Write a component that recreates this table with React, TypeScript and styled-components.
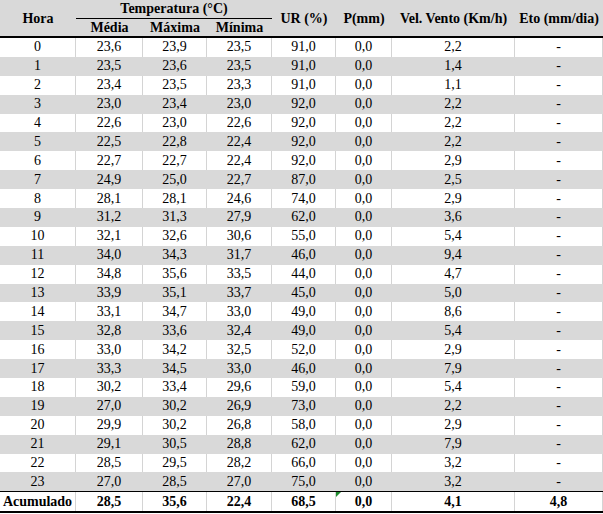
import React from 'react';
import styled, { createGlobalStyle } from 'styled-components';

const GlobalStyle = createGlobalStyle`
  body {
    margin: 0;
    background: #ffffff;
    font-family: 'Liberation Serif', 'Times New Roman', serif;
    color: #000000;
  }
`;

const COLUMNS = '76px 67px 64px 65px 64px 56px 123px 88px';

const Sheet = styled.div`
  width: 603px;
  font-size: 14px;
`;

const Head = styled.div`
  display: grid;
  grid-template-columns: ${COLUMNS};
  grid-template-rows: 19px 17px;
  background: #d9d9d9;
  border-bottom: 2px solid #000000;
  font-weight: bold;
`;

const HeadCell = styled.div<{ $span?: boolean; $group?: boolean }>`
  display: flex;
  align-items: center;
  justify-content: center;
  white-space: nowrap;
  grid-row: ${(p) => (p.$span ? 'span 2' : 'auto')};
  grid-column: ${(p) => (p.$group ? 'span 3' : 'auto')};
  padding-top: ${(p) => (p.$span ? '2px' : '0')};
  ${(p) => (p.$group ? 'border-bottom: 1px solid #000000; margin-top: -1px;' : '')}
`;

const Row = styled.div<{ $shaded?: boolean; $total?: boolean }>`
  display: grid;
  grid-template-columns: ${COLUMNS};
  height: ${(p) => (p.$total ? '19px' : '18.9px')};
  background: ${(p) => (p.$shaded ? '#d9d9d9' : '#ffffff')};
  font-weight: ${(p) => (p.$total ? 'bold' : 'normal')};
  ${(p) =>
    p.$total
      ? 'border-top: 1px solid #000000; border-bottom: 2px solid #000000;'
      : ''}
`;

const Cell = styled.div<{ $shaded?: boolean; $flag?: boolean }>`
  position: relative;
  display: flex;
  align-items: center;
  justify-content: center;
  white-space: nowrap;
  border-right: 1px solid ${(p) => (p.$shaded ? '#d9d9d9' : '#d4d4d4')};

  ${(p) =>
    p.$flag
      ? `&::before {
          content: '';
          position: absolute;
          top: 0;
          left: 0;
          border-top: 5px solid #1e8c2e;
          border-right: 5px solid transparent;
        }`
      : ''}
`;

const rows: string[][] = [
  ['23,6', '23,9', '23,5', '91,0', '0,0', '2,2'],
  ['23,5', '23,6', '23,5', '91,0', '0,0', '1,4'],
  ['23,4', '23,5', '23,3', '91,0', '0,0', '1,1'],
  ['23,0', '23,4', '23,0', '92,0', '0,0', '2,2'],
  ['22,6', '23,0', '22,6', '92,0', '0,0', '2,2'],
  ['22,5', '22,8', '22,4', '92,0', '0,0', '2,2'],
  ['22,7', '22,7', '22,4', '92,0', '0,0', '2,9'],
  ['24,9', '25,0', '22,7', '87,0', '0,0', '2,5'],
  ['28,1', '28,1', '24,6', '74,0', '0,0', '2,9'],
  ['31,2', '31,3', '27,9', '62,0', '0,0', '3,6'],
  ['32,1', '32,6', '30,6', '55,0', '0,0', '5,4'],
  ['34,0', '34,3', '31,7', '46,0', '0,0', '9,4'],
  ['34,8', '35,6', '33,5', '44,0', '0,0', '4,7'],
  ['33,9', '35,1', '33,7', '45,0', '0,0', '5,0'],
  ['33,1', '34,7', '33,0', '49,0', '0,0', '8,6'],
  ['32,8', '33,6', '32,4', '49,0', '0,0', '5,4'],
  ['33,0', '34,2', '32,5', '52,0', '0,0', '2,9'],
  ['33,3', '34,5', '33,0', '46,0', '0,0', '7,9'],
  ['30,2', '33,4', '29,6', '59,0', '0,0', '5,4'],
  ['27,0', '30,2', '26,9', '73,0', '0,0', '2,2'],
  ['29,9', '30,2', '26,8', '58,0', '0,0', '2,9'],
  ['29,1', '30,5', '28,8', '62,0', '0,0', '7,9'],
  ['28,5', '29,5', '28,2', '66,0', '0,0', '3,2'],
  ['27,0', '28,5', '27,0', '75,0', '0,0', '3,2'],
];

const total = ['Acumulado', '28,5', '35,6', '22,4', '68,5', '0,0', '4,1', '4,8'];

export default function App() {
  return (
    <>
      <GlobalStyle />
      <Sheet>
        <Head>
          <HeadCell $span>Hora</HeadCell>
          <HeadCell $group>Temperatura (°C)</HeadCell>
          <HeadCell $span>UR (%)</HeadCell>
          <HeadCell $span>P(mm)</HeadCell>
          <HeadCell $span>Vel. Vento (Km/h)</HeadCell>
          <HeadCell $span>Eto (mm/dia)</HeadCell>
          <HeadCell>Média</HeadCell>
          <HeadCell>Máxima</HeadCell>
          <HeadCell>Mínima</HeadCell>
        </Head>

        {rows.map((values, hour) => {
          const shaded = hour % 2 === 1;
          return (
            <Row key={hour} $shaded={shaded}>
              <Cell $shaded={shaded}>{hour}</Cell>
              {values.map((v, i) => (
                <Cell key={i} $shaded={shaded}>
                  {v}
                </Cell>
              ))}
              <Cell $shaded={shaded}>-</Cell>
            </Row>
          );
        })}

        <Row $total>
          {total.map((v, i) => (
            <Cell key={i} $flag={i === 5}>
              {v}
            </Cell>
          ))}
        </Row>
      </Sheet>
    </>
  );
}
